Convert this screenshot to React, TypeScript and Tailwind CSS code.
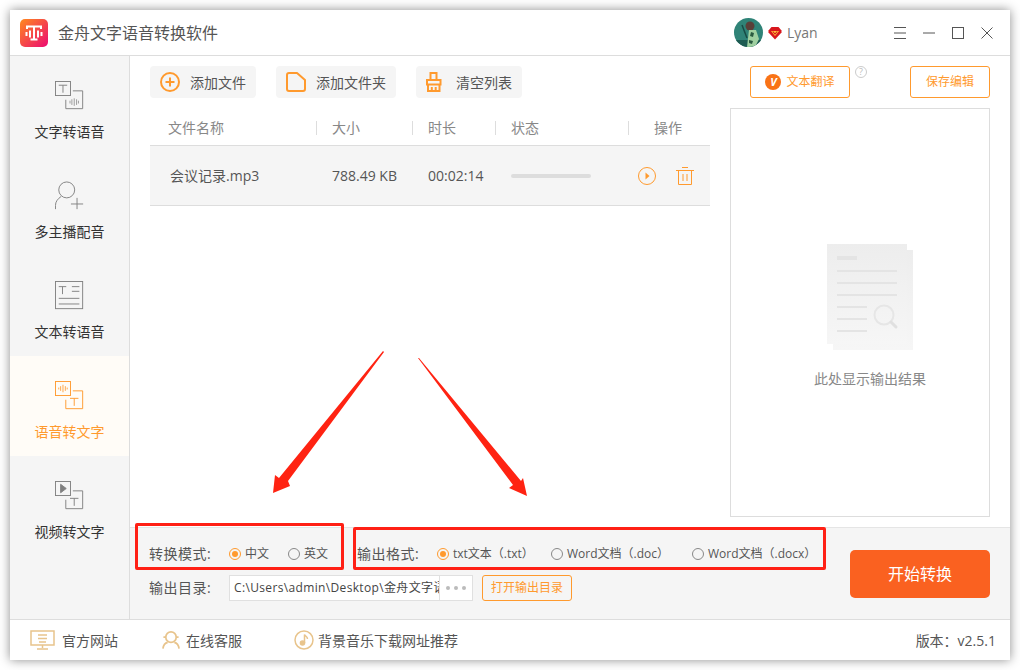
import type {ReactNode} from "react";

const FONT = "font-['Open_Sans','Noto_Sans_CJK_SC',sans-serif]";

function Logo() {
	return (
		<svg width="28" height="28" viewBox="0 0 28 28">
			<defs>
				<linearGradient id="logo" x1="0" y1="0" x2="1" y2="1">
					<stop offset="0" stopColor="#ff8a1e" />
					<stop offset="1" stopColor="#ec0a72" />
				</linearGradient>
			</defs>
			<rect width="28" height="28" rx="5" fill="url(#logo)" />
			<path d="M6 7.500h16M7 7v3M21 7v3M14 7.500v13M10.500 20.500h7M6.500 13v4M10 11.500v7M18 11.500v7M21.500 13v4" stroke="#fff" strokeWidth="2" fill="none" />
		</svg>
	);
}

function Avatar() {
	return (
		<svg width="29" height="29" viewBox="0 0 29 29">
			<defs>
				<clipPath id="av">
					<circle cx="14.500" cy="14.500" r="14.500" />
				</clipPath>
			</defs>
			<g clipPath="url(#av)">
				<rect width="29" height="29" fill="#2f8377" />
				<rect y="22" width="29" height="7" fill="#1d5b52" />
				<circle cx="16" cy="8" r="4.500" fill="#5a3f38" />
				<path d="M15 12l7 0 3 9-4 8H13z" fill="#9fd0a0" />
				<path d="M17 14l3 1-1 4-3-1zM15 22l4 1-1 3-3-1z" fill="#2a5a40" />
				<path d="M8 7l5 13" stroke="#174b45" strokeWidth="1.500" />
			</g>
		</svg>
	);
}

function VipBadge() {
	return (
		<svg width="14" height="14" viewBox="0 0 14 14">
			<path d="M3.500 1h7L13.500 4.500v2L7 13.500 .5 6.500v-2z" fill="#d8161d" />
			<path d="M3 5h8L7 10z" fill="#ffc53a" />
			<path d="M4.800 5.500L7 8l2.200-2.500" stroke="#d8161d" strokeWidth="1.100" fill="none" />
		</svg>
	);
}

function WindowButtons() {
	return (
		<div className="flex items-center gap-[17px] text-[#555]">
			<svg width="12" height="12" viewBox="0 0 12 12">
				<path d="M0 .5h12M0 6h12M0 11.500h12" stroke="currentColor" />
			</svg>
			<svg width="12" height="12" viewBox="0 0 12 12">
				<path d="M0 6h12" stroke="currentColor" />
			</svg>
			<svg width="12" height="12" viewBox="0 0 12 12">
				<rect x=".5" y=".5" width="11" height="11" fill="none" stroke="currentColor" />
			</svg>
			<svg width="12" height="12" viewBox="0 0 12 12">
				<path d="M.5 .5l11 11M11.500 .5l-11 11" stroke="currentColor" />
			</svg>
		</div>
	);
}

// sidebar icons: two overlapping cards with a T, a wave or a play mark
function TtsIcon() {
	return (
		<svg width="32" height="32" viewBox="0 0 32 32" fill="none" stroke="#808080">
			<rect x=".5" y=".5" width="16" height="15" />
			<path d="M4 4.500h9M8.500 4.500v8" />
			<path d="M19 10.500h10.500v19H11.500V20" />
			<path d="M16 21v3M18 19.500v6M20.500 18.500v8M23 19.500v6M25 21v3" strokeWidth=".8" />
		</svg>
	);
}

function VoiceIcon() {
	return (
		<svg width="32" height="32" viewBox="0 0 32 32" fill="none" stroke="#808080">
			<circle cx="12.500" cy="9.500" r="8.500" />
			<path d="M.5 30v-4C.5 22 3 19 6.500 16.500" />
			<path d="M17 24.500h13M23.500 18v12" />
		</svg>
	);
}

function TextIcon() {
	return (
		<svg width="32" height="32" viewBox="0 0 32 32" fill="none" stroke="#808080">
			<rect x=".5" y=".5" width="29" height="29" />
			<path d="M4 6h8M8 6v8M18 6h8M18 11h8M4 18.500h22M4 24.500h22" />
		</svg>
	);
}

function AsrIcon() {
	return (
		<svg width="32" height="32" viewBox="0 0 32 32" fill="none" stroke="#ff9a2e">
			<rect x=".5" y=".5" width="16" height="15" />
			<path d="M4 7v2M6 5.500v5M8.500 4v8M11 5.500v5M13 7v2" strokeWidth=".9" />
			<path d="M19 10.500h10.500v19H11.500V20" />
			<path d="M16 18.500h9M20.500 18.500v8" />
		</svg>
	);
}

function VideoIcon() {
	return (
		<svg width="32" height="32" viewBox="0 0 32 32" fill="none" stroke="#808080">
			<rect x=".5" y=".5" width="16" height="15" />
			<path d="M6 3.500l6 4.500-6 4.500z" fill="#808080" />
			<path d="M19 10.500h10.500v19H11.500V20" />
			<path d="M16 18.500h9M20.500 18.500v8" />
		</svg>
	);
}

function SideItem(props: {icon: ReactNode; label: string; active?: boolean}) {
	return (
		<div className={"h-[100px] flex flex-col items-center pt-[24px] " + (props.active ? "bg-[#fffcf7]" : "")}>
			<div className="h-[32px] w-[30px] flex justify-start">{props.icon}</div>
			<div className={"mt-[11px] text-[14px] leading-[18px] " + (props.active ? "text-[#ff9a2e]" : "text-[#333]")}>
				{props.label}
			</div>
		</div>
	);
}

function ToolButton(props: {icon: ReactNode; label: string; width: string}) {
	return (
		<div className={"h-[32px] rounded bg-[#f5f5f5] flex items-center pl-[10px] gap-[10px] text-[14px] text-[#555] " + props.width}>
			{props.icon}
			<span className="pt-[1px]">{props.label}</span>
		</div>
	);
}

function HeadCell(props: {label: string; left: string; line?: boolean}) {
	return (
		<div className={"h-[14px] pb-[2px] flex items-center text-[14px] text-[#888] " + props.left + (props.line ? " border-r border-[#ddd]" : "")}>
			{props.label}
		</div>
	);
}

function Radio(props: {label: string; checked?: boolean; gap: string}) {
	return (
		<div className={"flex items-center gap-[4px] text-[12px] text-[#555] " + props.gap}>
			{props.checked ? (
				<span className="w-[12px] h-[12px] rounded-full border border-[#ff9a2e] flex items-center justify-center">
					<span className="w-[6px] h-[6px] rounded-full bg-[#ff9a2e]" />
				</span>
			) : (
				<span className="w-[12px] h-[12px] rounded-full border border-[#888]" />
			)}
			<span className="whitespace-nowrap">{props.label}</span>
		</div>
	);
}

function FootLink(props: {icon: ReactNode; label: string; width: string; gap: string}) {
	return (
		<div className={"flex items-center text-[14px] text-[#555] " + props.width + " " + props.gap}>
			{props.icon}
			<span>{props.label}</span>
		</div>
	);
}

export default function App() {
	return (
		<div className={"relative w-[1020px] h-[670px] bg-white p-[10px] overflow-hidden " + FONT}>
			<div className="w-[1000px] h-[650px] flex flex-col bg-white shadow-[0_0_10px_rgba(0,0,0,0.45)]">
				<header className="h-[46px] shrink-0 flex items-center border-b border-[#ddd] pl-[10px] pr-[17px]">
					<Logo />
					<div className="ml-[10px] text-[16px] text-[#555]">金舟文字语音转换软件</div>
					<div className="ml-auto flex items-center">
						<Avatar />
						<span className="ml-[5px]">
							<VipBadge />
						</span>
						<span className="ml-[5px] mr-[76px] text-[14px] text-[#777] w-[31px]">Lyan</span>
					</div>
					<WindowButtons />
				</header>

				<div className="flex-1 flex min-h-0">
					<aside className="w-[120px] shrink-0 bg-[#f5f5f5] border-r border-[#ddd]">
						<SideItem icon={<TtsIcon />} label="文字转语音" />
						<SideItem icon={<VoiceIcon />} label="多主播配音" />
						<SideItem icon={<TextIcon />} label="文本转语音" />
						<SideItem icon={<AsrIcon />} label="语音转文字" active />
						<SideItem icon={<VideoIcon />} label="视频转文字" />
					</aside>

					<main className="flex-1 flex flex-col min-w-0">
						<div className="h-[471px] shrink-0 flex pt-[10px] pl-[20px] gap-[20px]">
							<section className="w-[560px]">
								<div className="flex gap-[20px]">
									<ToolButton
										width="w-[106px]"
										label="添加文件"
										icon={
											<svg width="20" height="20" viewBox="0 0 20 20" fill="none" stroke="#ff9a2e" strokeWidth="2">
												<circle cx="10" cy="10" r="9" />
												<path d="M10 5.500v9M5.500 10h9" />
											</svg>
										}
									/>
									<ToolButton
										width="w-[120px]"
										label="添加文件夹"
										icon={
											<svg width="20" height="20" viewBox="0 0 20 20" fill="none" stroke="#ff9a2e" strokeWidth="2">
												<path d="M1 3a2 2 0 0 1 2-2h8l8 7v9a2 2 0 0 1-2 2H3a2 2 0 0 1-2-2z" strokeLinejoin="round" />
											</svg>
										}
									/>
									<ToolButton
										width="w-[106px]"
										label="清空列表"
										icon={
											<svg width="20" height="20" viewBox="0 0 20 20" fill="none" stroke="#ff9a2e" strokeWidth="2">
												<path d="M4.500 8V1h6v7" />
												<rect x="1" y="8" width="13.500" height="4.500" />
												<path d="M2 12.500V19h11.500v-6.500M5.800 15v4M9.700 15v4" />
											</svg>
										}
									/>
								</div>
								<div className="h-[48px] border-b border-[#ddd] grid grid-cols-[167px_96px_83px_133px_81px] items-center pt-[13px]">
									<HeadCell label="文件名称" left="pl-[18px]" line />
									<HeadCell label="大小" left="pl-[15px]" line />
									<HeadCell label="时长" left="pl-[15px]" line />
									<HeadCell label="状态" left="pl-[15px]" line />
									<HeadCell label="操作" left="pl-[25px]" />
								</div>
								<div className="h-[60px] bg-[#f5f5f5] border-b border-[#ddd] grid grid-cols-[167px_96px_83px_133px_81px] items-center text-[14px] text-[#555]">
									<div className="pl-[20px]">会议记录.mp3</div>
									<div className="pl-[15px]">788.49 KB</div>
									<div className="pl-[15px]">00:02:14</div>
									<div className="pl-[15px]">
										<div className="w-[80px] h-[4px] rounded-full bg-[#ddd]" />
									</div>
									<div className="flex items-center gap-[20px] pl-[9px]">
										<svg width="18" height="18" viewBox="0 0 18 18" fill="none" stroke="#ff9a2e">
											<circle cx="9" cy="9" r="8.500" />
											<path d="M7.500 5.500l4 3.500-4 3.500z" fill="#ff9a2e" stroke="none" />
										</svg>
										<svg width="18" height="18" viewBox="0 0 18 18" fill="none" stroke="#ff9a2e">
											<path d="M0 3.500h18M6 .5h6M2.500 3.500v14h13v-14M7 7v7M11 7v7" />
										</svg>
									</div>
								</div>
							</section>

							<section className="w-[260px] flex flex-col">
								<div className="h-[32px] flex pl-[20px]">
									<div className="w-[100px] h-[32px] rounded-[3px] border border-[#ff9a2e] flex items-center justify-center gap-[5px] text-[12px] text-[#ff9a2e]">
										<span className="w-[16px] h-[16px] rounded-full bg-[#f97316] text-white text-[11px] font-bold italic flex items-center justify-center">V</span>
										文本翻译
									</div>
									<span className="ml-[5px] w-[12px] h-[12px] rounded-full border border-[#ccc] text-[#bbb] text-[9px] leading-[10px] text-center">?</span>
									<div className="ml-auto w-[80px] h-[32px] rounded-[3px] border border-[#ff9a2e] flex items-center justify-center text-[12px] text-[#ff9a2e]">
										保存编辑
									</div>
								</div>
								<div className="mt-[10px] h-[409px] border border-[#ddd] flex flex-col items-center pt-[135px] pl-[20px]">
									<svg width="86" height="106" viewBox="0 0 86 106">
										<defs>
											<linearGradient id="sheet" x1="0" y1="0" x2="0" y2="1">
												<stop offset="0" stopColor="#ededed" />
												<stop offset="1" stopColor="#f6f6f6" />
											</linearGradient>
										</defs>
										<rect x="6" y="6" width="80" height="100" fill="url(#sheet)" />
										<rect width="80" height="100" fill="url(#sheet)" />
										<path d="M10 14h20" stroke="#e4e4e4" strokeWidth="4" />
										<path d="M10 27h60M10 39h60M10 51h60M10 63h30M10 75h30M10 87h30" stroke="#e4e4e4" strokeWidth="2" />
										<circle cx="57" cy="71" r="9.500" fill="none" stroke="#e6e6e6" strokeWidth="2" />
										<path d="M64 78l5 5" stroke="#e0e0e0" strokeWidth="3" strokeLinecap="round" />
									</svg>
									<div className="mt-[20px] text-[14px] leading-[18px] text-[#888]">此处显示输出结果</div>
								</div>
							</section>
						</div>

						<div className="flex-1 bg-[#f5f5f5] border-t border-[#e5e5e5] flex pl-[19px] pr-[20px]">
							<div className="w-[701px] pt-[17px]">
								<div className="flex items-center h-[18px] text-[14px] text-[#555]">
									<span className="w-[80px] pb-[2px] tracking-[0.5px]">转换模式:</span>
									<Radio label="中文" checked gap="w-[59px]" />
									<Radio label="英文" gap="w-[69px]" />
									<span className="w-[80px] pb-[2px] tracking-[0.5px]">输出格式:</span>
									<Radio label="txt文本（.txt）" checked gap="w-[114px]" />
									<Radio label="Word文档（.doc）" gap="w-[141px]" />
									<Radio label="Word文档（.docx）" gap="" />
								</div>
								<div className="flex items-center mt-[12px]">
									<span className="w-[80px] pb-[2px] text-[14px] tracking-[0.5px] text-[#555]">输出目录:</span>
									<div className="w-[244px] h-[26px] bg-white border border-[#e0e0e0] flex items-center">
										<span className="w-[209px] pl-[4px] overflow-hidden whitespace-nowrap text-[12px] tracking-[0.35px] text-[#444]">C:\Users\admin\Desktop\金舟文字语音</span>
										<span className="flex-1 h-full border-l border-[#e0e0e0] flex items-center justify-center gap-[4px]">
											<span className="w-[4px] h-[4px] rounded-full bg-[#bbb]" />
											<span className="w-[4px] h-[4px] rounded-full bg-[#bbb]" />
											<span className="w-[4px] h-[4px] rounded-full bg-[#bbb]" />
										</span>
									</div>
									<div className="ml-[9px] w-[90px] h-[26px] rounded-[3px] border border-[#ff9a2e] flex items-center justify-center text-[12px] text-[#ff9a2e]">
										打开输出目录
									</div>
								</div>
							</div>
							<div className="pt-[22px]">
								<div className="w-[140px] h-[48px] rounded-[5px] bg-[#fa6120] text-white text-[16px] flex items-center justify-center">开始转换</div>
							</div>
						</div>
					</main>
				</div>

				<footer className="h-[41px] shrink-0 border-t border-[#ddd] flex items-center pl-[20px] pr-[14px]">
					<FootLink
						width="w-[132px]"
						gap="gap-[7px]"
						label="官方网站"
						icon={
							<svg width="25" height="20" viewBox="0 0 25 20" fill="none" stroke="#e8c48c" strokeWidth="1.500">
								<path d="M1 1h23v14H1zM8 5h9M8 8.500h9M9 12h7M12.500 15v3M7 19h11" />
							</svg>
						}
					/>
					<FootLink
						width="w-[132px]"
						gap="gap-[6px]"
						label="在线客服"
						icon={
							<svg width="18" height="20" viewBox="0 0 19 20" fill="none" stroke="#e8c48c" strokeWidth="1.800">
								<circle cx="9.500" cy="7" r="5.500" />
								<path d="M1 19c.5-4 3-6 5-6.500M18 19c-.5-4-3-6-5-6.500M1.500 7H4M15 7h2.500" />
							</svg>
						}
					/>
					<FootLink
						width="w-[300px]"
						gap="gap-[4px]"
						label="背景音乐下载网址推荐"
						icon={
							<svg width="20" height="20" viewBox="0 0 20 20">
								<circle cx="10" cy="10" r="9" fill="none" stroke="#e8c48c" strokeWidth="1.500" />
								<circle cx="8.500" cy="13" r="2.800" fill="#e8c48c" />
								<path d="M10.500 13V4.500c1 2 3 2 3 4.500" fill="none" stroke="#e8c48c" strokeWidth="1.500" />
							</svg>
						}
					/>
					<span className="ml-auto text-[14px] text-[#555]">版本：v2.5.1</span>
				</footer>
			</div>

			{/* red annotations drawn on top of the screenshot */}
			<div className="absolute left-[135px] top-[523px] w-[209px] h-[47px] border-[3px] border-[#ff2015] rounded-[2px]" />
			<div className="absolute left-[353px] top-[527px] w-[473px] h-[43px] border-[3px] border-[#ff2015] rounded-[2px]" />
			<svg className="absolute left-0 top-0" width="1020" height="670" viewBox="0 0 1020 670">
				<path d="M383 351L384 352 288 481 290 486 273 493 275 475 279 478z" fill="#ff2312" />
				<path d="M418 358L419 358 521 481 523 478 527 496 509 488 513 485z" fill="#ff2312" />
			</svg>
		</div>
	);
}
